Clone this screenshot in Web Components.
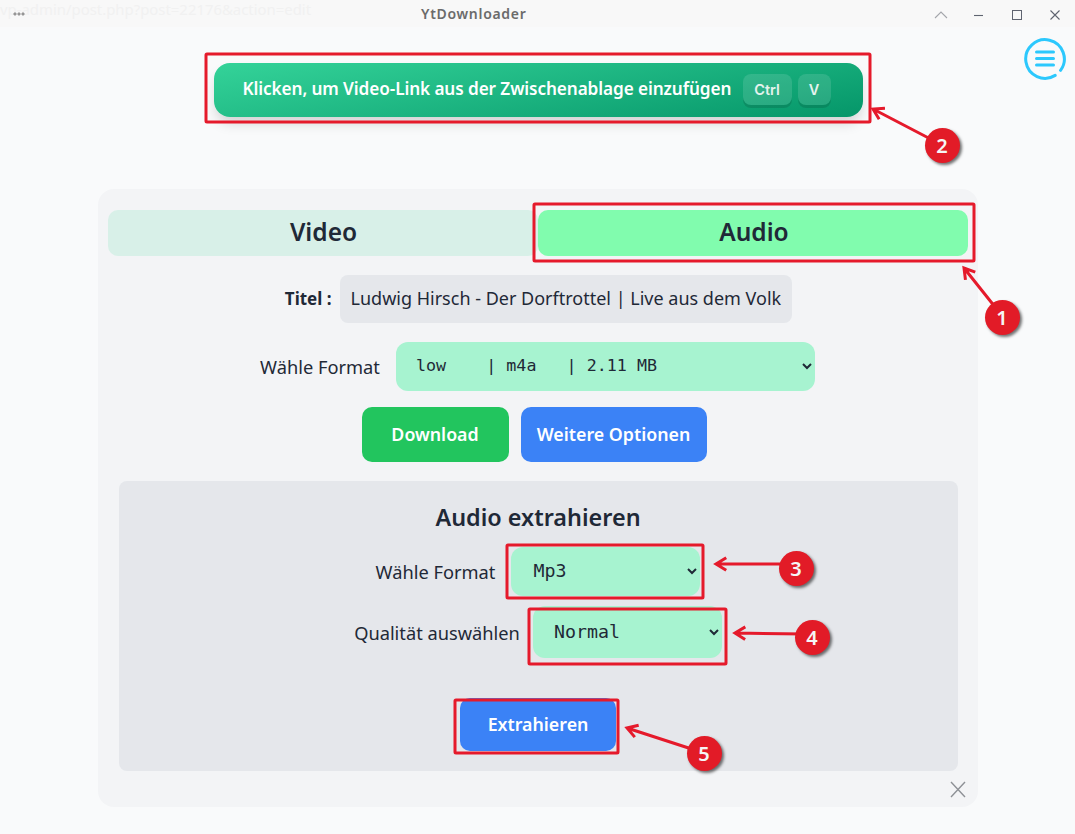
<!DOCTYPE html>
<html lang="de">
<head>
<meta charset="utf-8">
<title>YtDownloader</title>
<style>
    html, body { margin: 0; height: 100%; }
    body { background: #f9fafb; font-family: "Noto Sans", "Open Sans", sans-serif; color: #1f2937; overflow: hidden; }
</style>
</head>
<body>
<yt-app></yt-app>
<script>
const SANS = '"Noto Sans", "Open Sans", sans-serif';
const MONO = '"DejaVu Sans Mono", "Liberation Mono", monospace';

class YtTitlebar extends HTMLElement {
    constructor() {
        super();
        this.attachShadow({ mode: 'open' });
        this.shadowRoot.innerHTML = `
            <style>
                :host { display: flex; align-items: center; height: 27px; background: #f8f8f8; position: relative; overflow: hidden; }
                .ghost { position: absolute; left: 0; top: -1px; font-size: 14.900px; color: #f1f1f1; white-space: nowrap; }
                .dots { position: relative; margin-left: 13px; width: 12px; }
                .title { position: relative; margin-left: 396px; font-size: 14px; font-weight: 600; color: #6b6b6b; letter-spacing: .7px; padding-bottom: 1px; }
                .ctrls { margin-left: auto; display: flex; padding-right: 15px; position: relative; top: 1px; }
                svg { display: block; fill: none; }
            </style>
            <span class="ghost">vp-admin/post.php?post=22176&amp;action=edit</span>
            <svg class="dots" width="12" height="4" viewBox="0 0 12 4"><g stroke="#666" stroke-width=".9"><circle cx="2" cy="2" r="1.1"/><circle cx="6" cy="2" r="1.1"/><circle cx="10" cy="2" r="1.1"/></g></svg>
            <span class="title"><slot></slot></span>
            <div class="ctrls">
                <svg width="14" height="14" viewBox="0 0 14 14"><path d="M1 10 7 4l6 6" stroke="#a4a6ab" stroke-width="1.1"/></svg>
                <svg width="9" height="14" viewBox="0 0 9 14" style="margin-left:26px"><path d="M0 7.500h9" stroke="#5f6470" stroke-width="1.100"/></svg>
                <svg width="10" height="14" viewBox="0 0 10 14" style="margin-left:29px"><rect x=".5" y="2.500" width="9" height="9" stroke="#5f6470"/></svg>
                <svg width="10" height="14" viewBox="0 0 10 14" style="margin-left:28px"><path d="m.5 2.500 9 9m0-9-9 9" stroke="#5f6470" stroke-width="1.100"/></svg>
            </div>
        `;
    }
}

class YtPaste extends HTMLElement {
    constructor() {
        super();
        this.attachShadow({ mode: 'open' });
        this.shadowRoot.innerHTML = `
            <style>
                :host { display: flex; align-items: center; width: 649px; height: 54px; box-sizing: border-box; padding: 0 32px 0 29px; border-radius: 16px;
                    background: linear-gradient(170deg, #34d399 0%, #059669 100%); box-shadow: 0 8px 14px -3px rgba(0,0,0,.18); color: #fff; font-size: 17.200px; font-weight: 600; white-space: nowrap; }
                .keys { margin-left: auto; display: flex; gap: 6px; margin-top: -2px; }
                kbd { font-family: "Inter", ${SANS}; font-size: 14.500px; font-weight: 600; color: #e5f3ee; height: 31px; box-sizing: border-box; justify-content: center; border-radius: 8px;
                    display: flex; align-items: center; background: rgba(255,255,255,.12); box-shadow: 0 3px 0 rgba(0,0,0,.12); }
                .ctrl { width: 49px; }
                .v { width: 33px; }
                .text { letter-spacing: -.1px; padding-bottom: 4px; }
            </style>
            <span class="text"><slot></slot></span>
            <span class="keys"><kbd class="ctrl">Ctrl</kbd><kbd class="v">V</kbd></span>
        `;
    }
}

class YtMenuIcon extends HTMLElement {
    constructor() {
        super();
        this.attachShadow({ mode: 'open' });
        this.shadowRoot.innerHTML = `
            <style>
                :host { display: block; position: absolute; left: 1024px; top: 38px; width: 42px; height: 42px; }
                svg { display: block; }
            </style>
            <svg width="42" height="42" viewBox="0 0 42 42" fill="none" stroke="#2cc8fd" stroke-linecap="round">
                <path d="M31.200 37.370A19.300 19.300 0 1 1 36.560 32.410" stroke-width="3"/>
                <path d="M12.500 14h17M12.500 20.500h17M12.500 27h17" stroke-width="3"/>
            </svg>
        `;
    }
}

class YtTabs extends HTMLElement {
    constructor() {
        super();
        this.attachShadow({ mode: 'open' });
        this.shadowRoot.innerHTML = `
            <style>
                :host { display: grid; grid-template-columns: 1fr 1fr; }
                div { height: 46px; box-sizing: border-box; padding: 0 0 4px 2px; display: flex; align-items: center; justify-content: center; border-radius: 10px; font-size: 24.500px; font-weight: 600; color: #1f2937; }
                .off { background: #d8f0e8; }
                .on { background: #81fcae; padding-left: 3px; }
            </style>
            <div class="off">Video</div>
            <div class="on">Audio</div>
        `;
    }
}

class YtField extends HTMLElement {
    constructor() {
        super();
        this.attachShadow({ mode: 'open' });
        this.shadowRoot.innerHTML = `
            <style>
                :host { display: flex; align-items: center; justify-content: center; gap: var(--gap, 16px); font-size: 18.250px; }
            </style>
            <span class="label"><slot name="label"></slot></span>
            <slot></slot>
        `;
    }
}

class YtSelect extends HTMLElement {
    constructor() {
        super();
        this.attachShadow({ mode: 'open' });
        const width = this.getAttribute('width') || 189;
        const height = this.getAttribute('height') || 49;
        const pad = this.getAttribute('pad') || 16;
        const lift = this.getAttribute('lift') || 4;
        const options = (this.getAttribute('options') || '').split(',');
        const size = this.getAttribute('size') || 16.7;
        this.shadowRoot.innerHTML = `
            <style>
                :host { display: block; }
                select { display: block; width: ${width}px; height: ${height}px; border: 0; outline: 0; background-color: #a7f3d0; color: #1f2937;
                    border-radius: 12px; font-family: ${MONO}; font-size: ${size}px; padding: 0 0 ${lift}px ${pad}px; }
            </style>
            <select>${options.map(o => `<option>${o.replace(/ /g, '\u00a0')}</option>`).join('')}</select>
        `;
    }
}

class YtButton extends HTMLElement {
    constructor() {
        super();
        this.attachShadow({ mode: 'open' });
        const width = this.getAttribute('width');
        const height = this.getAttribute('height');
        const color = this.getAttribute('color');
        this.shadowRoot.innerHTML = `
            <style>
                :host { display: block; }
                button { display: block; width: ${width}px; height: ${height}px; border: 0; border-radius: 10px; background: ${color}; color: #fff;
                    font-family: ${SANS}; font-size: 17.800px; font-weight: 600; padding: 0 0 2px; }
            </style>
            <button><slot></slot></button>
        `;
    }
}

class YtExtract extends HTMLElement {
    constructor() {
        super();
        this.attachShadow({ mode: 'open' });
        this.shadowRoot.innerHTML = `
            <style>
                :host { display: flex; flex-direction: column; align-items: center; height: 290px; box-sizing: border-box; margin: 19px 10px 0 11px; padding-top: 20px; background: #e5e7eb; border-radius: 8px; }
                h2 { margin: 0 0 14px; font-size: 23.400px; line-height: 32px; font-weight: 600; }
                .rows { display: flex; flex-direction: column; gap: 10px; }
                .btn { margin-top: 40px; }
            </style>
            <h2>Audio extrahieren</h2>
            <div class="rows"><slot name="rows"></slot></div>
            <div class="btn"><slot name="action"></slot></div>
        `;
    }
}

class YtPanel extends HTMLElement {
    constructor() {
        super();
        this.attachShadow({ mode: 'open' });
        this.shadowRoot.innerHTML = `
            <style>
                :host { display: flex; flex-direction: column; width: 880px; height: 618px; box-sizing: border-box; padding: 21px 10px 0; background: #f3f4f6; border-radius: 16px; position: relative; }
                .title { display: flex; justify-content: center; align-items: center; gap: 8px; margin-top: 19px; padding-left: 2px; font-size: 17px; }
                .title b { font-weight: 700; padding-bottom: 1px; }
                .value { height: 48px; box-sizing: border-box; padding: 0 11px 3px; display: flex; align-items: center; background: #e5e7eb; border-radius: 8px; white-space: nowrap; font-size: 18px; }
                .format { margin-top: 19px; }
                .actions { display: flex; justify-content: center; gap: 12px; margin-top: 16px; padding-right: 7px; }
                .close { position: absolute; right: 12px; bottom: 9px; display: block; }
            </style>
            <yt-tabs></yt-tabs>
            <div class="title"><b>Titel :</b><span class="value"><slot name="title"></slot></span></div>
            <div class="format"><slot name="format"></slot></div>
            <div class="actions"><slot name="actions"></slot></div>
            <slot></slot>
            <svg class="close" width="16" height="17" viewBox="0 0 16 17" fill="none" stroke="#8e9196" stroke-width="1.400"><path d="m1 1 14 15M15 1 1 16"/></svg>
        `;
    }
}

// red call-outs drawn over the app
class YtMarks extends HTMLElement {
    constructor() {
        super();
        this.attachShadow({ mode: 'open' });
        const boxes = [
            [206, 54, 664, 68],
            [534, 204, 440, 57],
            [507, 545, 196, 53],
            [529, 609, 197, 55],
            [455, 700, 163, 53]
        ];
        const arrows = [
            [1003, 317, 964, 268],
            [942, 145, 873, 109],
            [790, 564, 716, 564],
            [805, 634, 735, 633],
            [704, 753, 627, 728]
        ];
        const badges = [[1002, 317, '1'], [942, 145, '2'], [796, 568, '3'], [812, 637, '4'], [704, 753, '5']];
        const rect = boxes.map(b => `<rect x="${b[0]}" y="${b[1]}" width="${b[2]}" height="${b[3]}" rx="1"/>`).join('');
        const lines = arrows.map(a => {
            const ang = Math.atan2(a[3] - a[1], a[2] - a[0]);
            const wing = d => {
                const t = ang + d;
                return `${a[2] - 12 * Math.cos(t)} ${a[3] - 12 * Math.sin(t)}`;
            };
            return `<path d="M${a[0]} ${a[1]}L${a[2]} ${a[3]}M${wing(.55)}L${a[2]} ${a[3]}L${wing(-.55)}"/>`;
        }).join('');
        const dots = badges.map(b => `<div class="badge" style="left:${b[0] - 17.500}px;top:${b[1] - 17.500}px">${b[2]}</div>`).join('');
        this.shadowRoot.innerHTML = `
            <style>
                :host { display: block; position: absolute; inset: 0; pointer-events: none; }
                svg { position: absolute; left: 0; top: 0; }
                .badge { position: absolute; width: 35px; height: 35px; border-radius: 50%; background: #e21b27; color: #f5f5f5; font-size: 20px; font-weight: 600;
                    display: flex; align-items: center; justify-content: center; box-shadow: 2px 2px 3px rgba(0,0,0,.55); }
            </style>
            <svg width="1075" height="834" fill="none" stroke="#e51a2b" stroke-width="3">
                ${rect}${lines}
            </svg>
            ${dots}
        `;
    }
}

class YtApp extends HTMLElement {
    constructor() {
        super();
        this.attachShadow({ mode: 'open' });
        this.shadowRoot.innerHTML = `
            <style>
                :host { display: flex; flex-direction: column; align-items: center; height: 834px; position: relative; }
                yt-titlebar { align-self: stretch; }
                yt-paste { margin: 36px 0 0 1px; }
                yt-panel { margin-top: 72px; }
            </style>
            <yt-titlebar>YtDownloader</yt-titlebar>
            <yt-menu-icon></yt-menu-icon>
            <yt-paste>Klicken, um Video-Link aus der Zwischenablage einzufügen</yt-paste>
            <yt-panel>
                <span slot="title">Ludwig Hirsch - Der Dorftrottel | Live aus dem Volk</span>
                <yt-field slot="format">
                    <span slot="label">Wähle Format</span>
                    <yt-select width="419" pad="16" options="low    | m4a   | 2.11 MB"></yt-select>
                </yt-field>
                <yt-button slot="actions" width="147" height="55" color="#22c55e">Download</yt-button>
                <yt-button slot="actions" width="186" height="55" color="#3b82f6">Weitere Optionen</yt-button>
                <yt-extract>
                    <yt-field slot="rows" style="--gap:16px">
                        <span slot="label">Wähle Format</span>
                        <yt-select width="189" pad="18" lift="2" size="18.300" options="Mp3"></yt-select>
                    </yt-field>
                    <yt-field slot="rows" style="--gap:13px">
                        <span slot="label">Qualität auswählen</span>
                        <yt-select width="189" height="52" pad="17" lift="2" size="18.300" options="Normal"></yt-select>
                    </yt-field>
                    <yt-button slot="action" width="156" height="53" color="#3b82f6">Extrahieren</yt-button>
                </yt-extract>
            </yt-panel>
            <yt-marks></yt-marks>
        `;
    }
}

customElements.define('yt-titlebar', YtTitlebar);
customElements.define('yt-paste', YtPaste);
customElements.define('yt-menu-icon', YtMenuIcon);
customElements.define('yt-tabs', YtTabs);
customElements.define('yt-field', YtField);
customElements.define('yt-select', YtSelect);
customElements.define('yt-button', YtButton);
customElements.define('yt-extract', YtExtract);
customElements.define('yt-panel', YtPanel);
customElements.define('yt-marks', YtMarks);
customElements.define('yt-app', YtApp);
</script>
</body>
</html>
